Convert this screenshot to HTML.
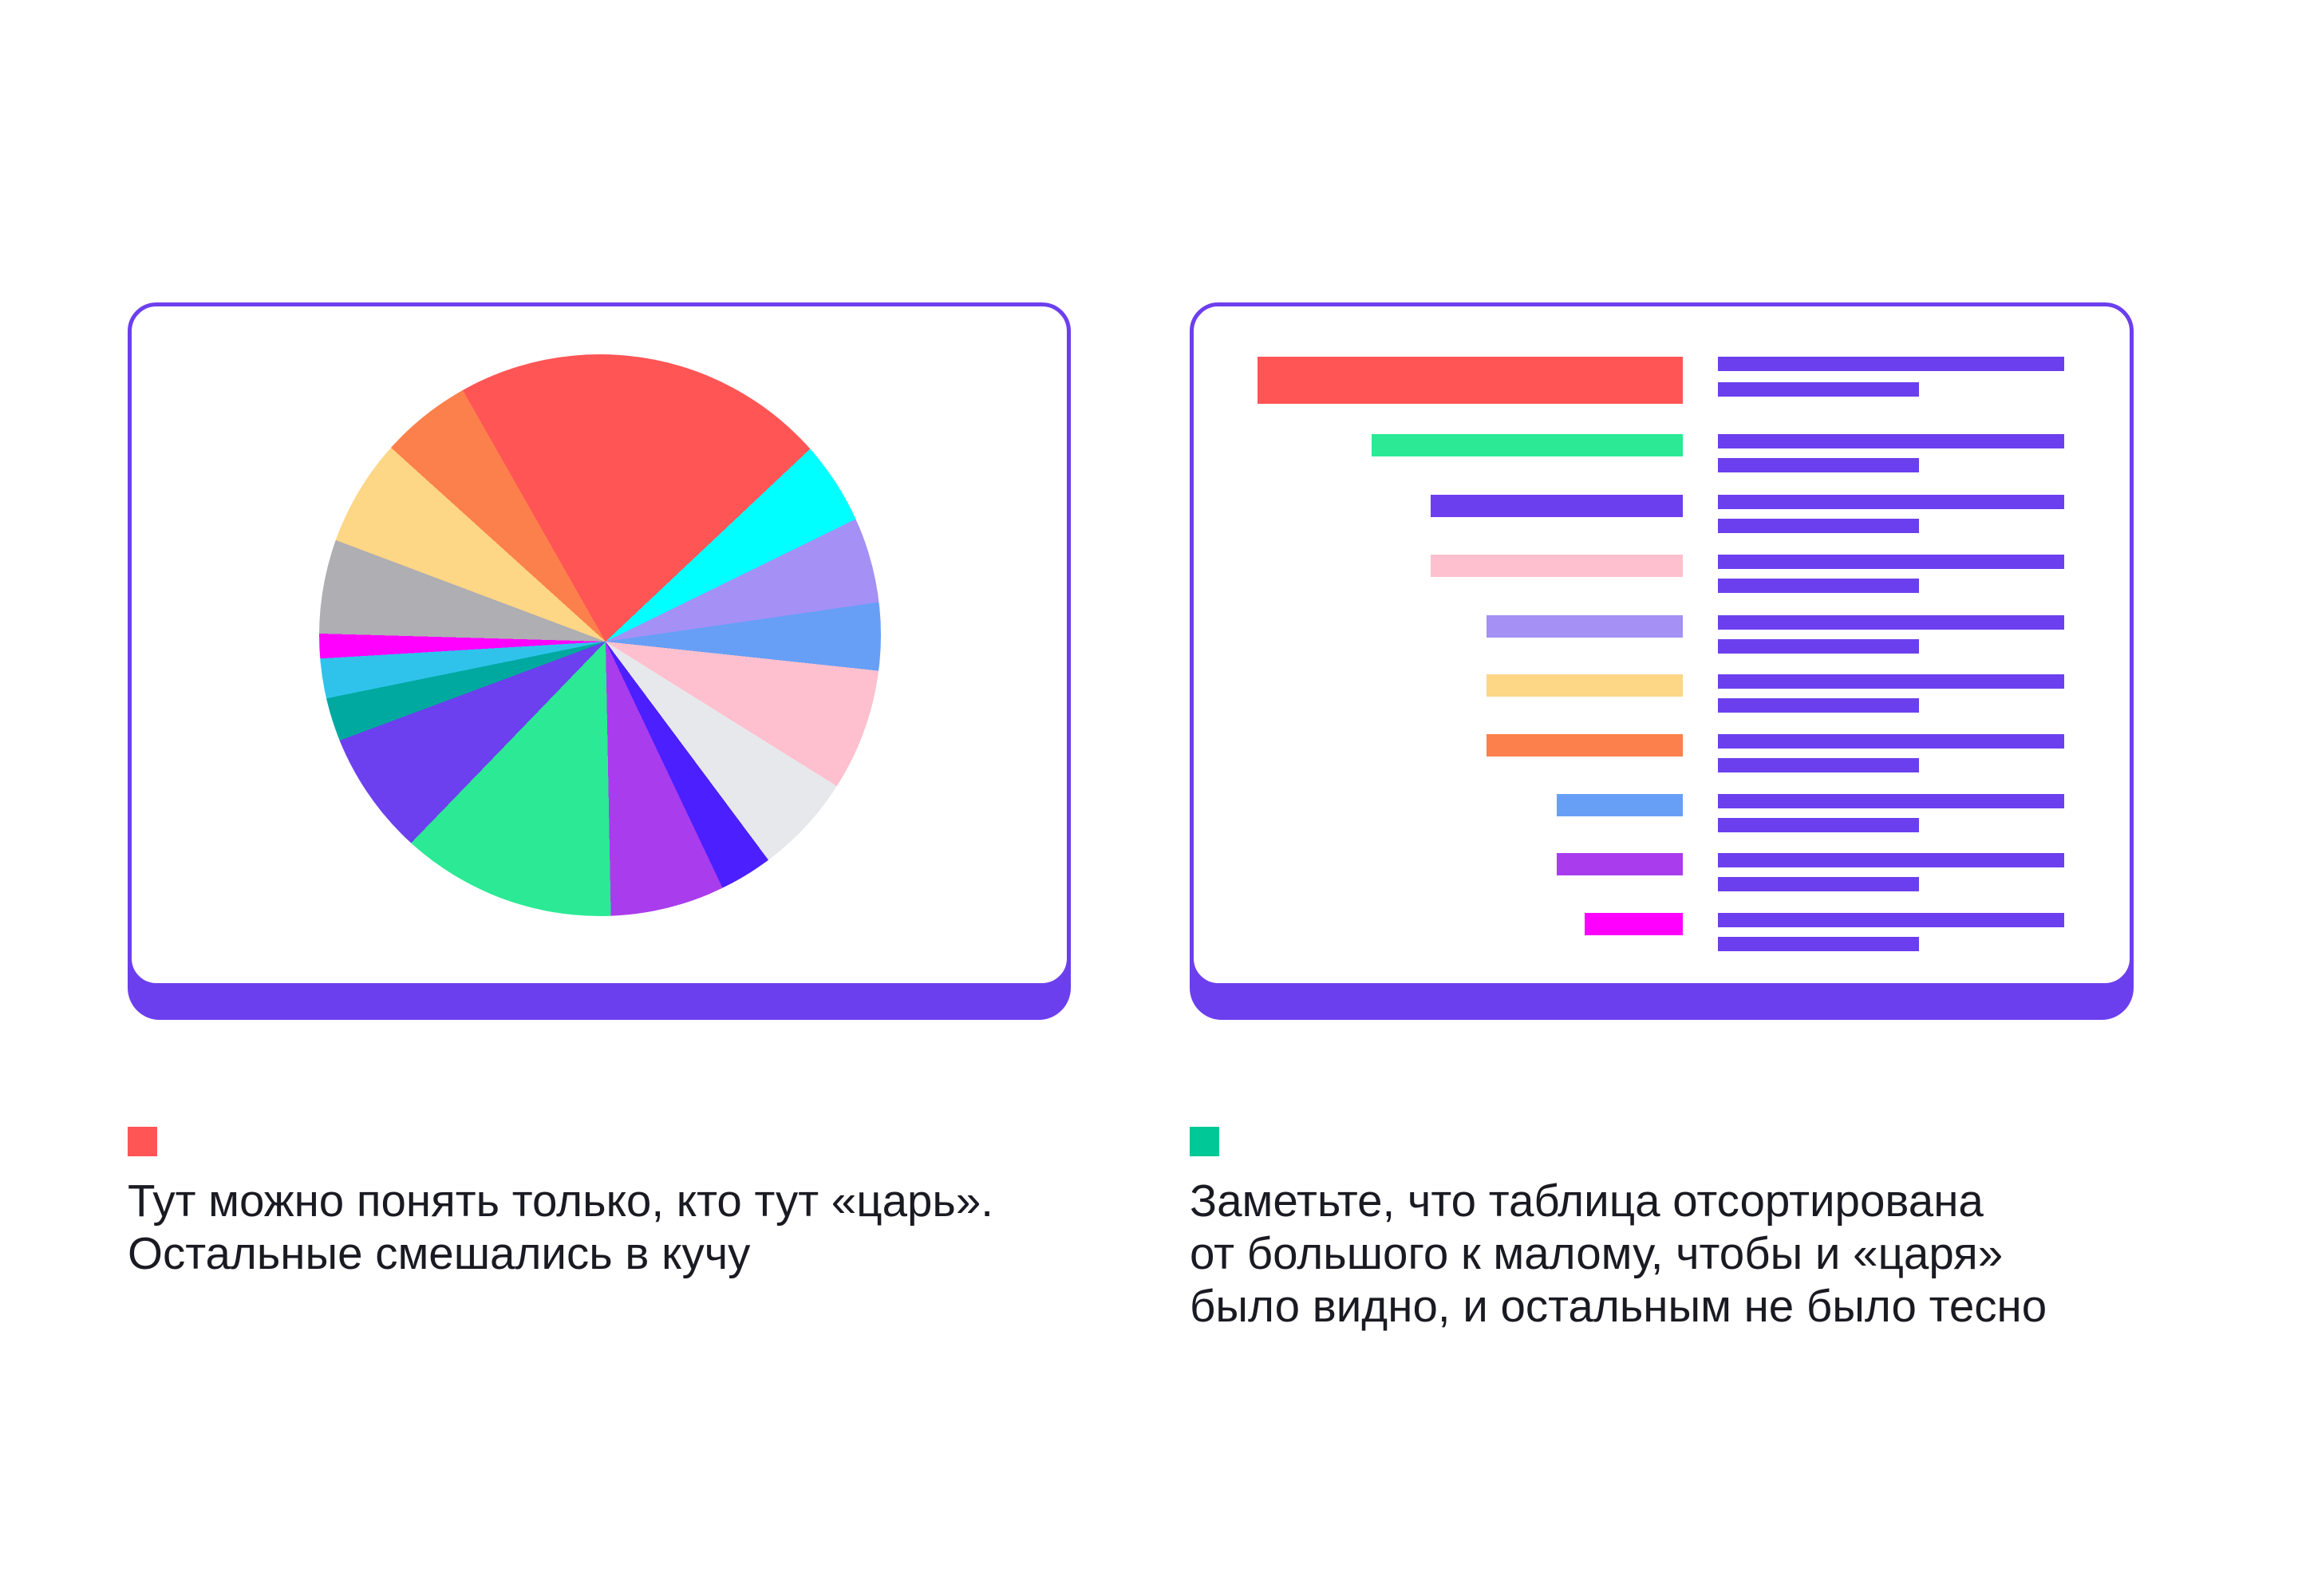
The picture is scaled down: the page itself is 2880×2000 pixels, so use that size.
<!DOCTYPE html>
<html><head><meta charset="utf-8"><style>
body{margin:0;width:2880px;height:2000px;background:#fff;position:relative;overflow:hidden;font-family:"Liberation Sans",sans-serif}
.abs{position:absolute}
.shadow{background:#6C3FEE;border-radius:40px}
.card{background:#fff;border:5px solid #6C3FEE;border-radius:36px;box-sizing:border-box}
.pie{border-radius:50%;background:conic-gradient(from 330.4deg at calc(50% + 7px) calc(50% + 8px),#FF5555 0 76.3deg,#00FFFF 0 93.5deg,#A590F5 0 111.4deg,#679FF7 0 125.7deg,#FEC0CE 0 151.6deg,#E7E8EC 0 172.9deg,#4B1FFF 0 184.2deg,#A93CED 0 208.5deg,#2CE995 0 253.6deg,#6C40EE 0 279.2deg,#00A9A0 0 288.1deg,#2FC3EC 0 296.2deg,#FF00FF 0 301.2deg,#AEAEB3 0 320.2deg,#FDD686 0 341.7deg,#FC804B 0 360deg)}
.b{position:absolute;height:28px}
.l{position:absolute;left:2153px;height:18px;background:#6C3FEE}
.txt{position:absolute;font-size:56.5px;line-height:66px;color:#1a1a22;white-space:nowrap}
</style></head><body>
<div class="abs shadow" style="left:160px;top:440px;width:1182px;height:838px"></div>
<div class="abs card" style="left:160px;top:379px;width:1182px;height:858px"></div>
<div class="abs pie" style="left:400px;top:444px;width:704px;height:704px"></div>

<div class="abs shadow" style="left:1491px;top:440px;width:1183px;height:838px"></div>
<div class="abs card" style="left:1491px;top:379px;width:1183px;height:858px"></div>

<div class="b" style="left:1576px;top:447px;width:533px;height:59px;background:#FF5555"></div>
<div class="b" style="left:1719px;top:544px;width:390px;background:#2CE995"></div>
<div class="b" style="left:1793px;top:620px;width:316px;background:#6C3FEE"></div>
<div class="b" style="left:1793px;top:695px;width:316px;background:#FEC0CE"></div>
<div class="b" style="left:1863px;top:771px;width:246px;background:#A590F5"></div>
<div class="b" style="left:1863px;top:845px;width:246px;background:#FDD686"></div>
<div class="b" style="left:1863px;top:920px;width:246px;background:#FC804B"></div>
<div class="b" style="left:1951px;top:995px;width:158px;background:#679FF7"></div>
<div class="b" style="left:1951px;top:1069px;width:158px;background:#A93CED"></div>
<div class="b" style="left:1986px;top:1144px;width:123px;background:#FF00FF"></div>

<div class="l" style="top:447px;width:434px"></div><div class="l" style="top:479px;width:252px"></div>
<div class="l" style="top:544px;width:434px"></div><div class="l" style="top:574px;width:252px"></div>
<div class="l" style="top:620px;width:434px"></div><div class="l" style="top:650px;width:252px"></div>
<div class="l" style="top:695px;width:434px"></div><div class="l" style="top:725px;width:252px"></div>
<div class="l" style="top:771px;width:434px"></div><div class="l" style="top:801px;width:252px"></div>
<div class="l" style="top:845px;width:434px"></div><div class="l" style="top:875px;width:252px"></div>
<div class="l" style="top:920px;width:434px"></div><div class="l" style="top:950px;width:252px"></div>
<div class="l" style="top:995px;width:434px"></div><div class="l" style="top:1025px;width:252px"></div>
<div class="l" style="top:1069px;width:434px"></div><div class="l" style="top:1099px;width:252px"></div>
<div class="l" style="top:1144px;width:434px"></div><div class="l" style="top:1174px;width:252px"></div>

<div class="abs" style="left:160px;top:1412px;width:37px;height:37px;background:#FF5555"></div>
<div class="abs" style="left:1491px;top:1412px;width:37px;height:37px;background:#00C896"></div>

<div class="txt" style="left:160px;top:1472px">Тут можно понять только, кто тут «царь».<br>Остальные смешались в кучу</div>
<div class="txt" style="left:1491px;top:1472px">Заметьте, что таблица отсортирована<br>от большого к малому, чтобы и «царя»<br>было видно, и остальным не было тесно</div>
</body></html>
